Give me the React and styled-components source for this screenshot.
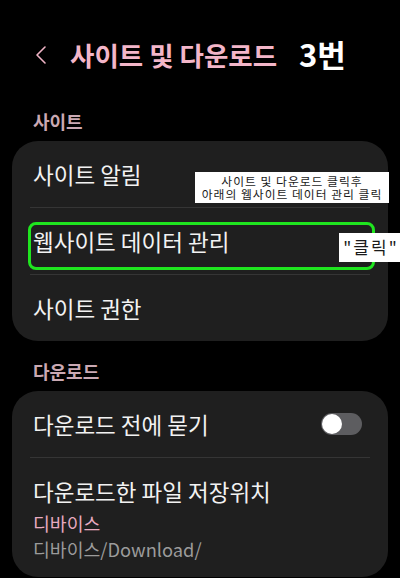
import styled, { createGlobalStyle } from "styled-components";

const GlobalStyle = createGlobalStyle`
  html, body {
    margin: 0;
    padding: 0;
    background: #000;
  }
  body {
    font-family: "Noto Sans CJK KR", "Noto Sans", sans-serif;
    -webkit-font-smoothing: antialiased;
  }
`;

const Page = styled.div`
  position: relative;
  width: 400px;
  height: 578px;
  overflow: hidden;
  background: #000;
`;

const Header = styled.div`
  display: flex;
  align-items: center;
  height: 72px;
  padding: 19px 0 0 34px;
`;

const BackButton = styled.div`
  display: flex;
  align-items: center;
  width: 36px;
  height: 30px;
`;

const Title = styled.h1`
  margin: 0;
  font-size: 26.5px;
  line-height: 30px;
  font-weight: 700;
  color: #f3b6c9;
  white-space: nowrap;
`;

const Step = styled.span`
  margin-left: 22px;
  font-size: 31px;
  line-height: 30px;
  font-weight: 700;
  color: #fff;
  margin-top: -2px;
  white-space: nowrap;
`;

const SectionTitle = styled.div`
  padding: 19px 33px 9px;
  font-size: 18px;
  line-height: 22px;
  font-weight: 700;
  color: #caa9b3;
`;

const Card = styled.div`
  margin: 0 12px;
  background: #1f1f1f;
  border-radius: 26px;
  overflow: hidden;
`;

const Row = styled.div`
  display: flex;
  align-items: center;
  justify-content: space-between;
  height: 66px;
  padding: 0 26px 0 21px;
`;

const Stack = styled.div`
  display: flex;
  flex-direction: column;
  height: 119px;
  box-sizing: border-box;
  padding: 18px 26px 0 21px;
`;

const Label = styled.div`
  font-size: 22.5px;
  line-height: 30px;
  font-weight: 400;
  color: #f2f2f2;
  margin-bottom: ${(p) => p.$mb || 0}px;
  white-space: nowrap;
`;

const Sub = styled.div`
  font-size: 18.3px;
  line-height: 26px;
  color: ${(p) => p.$color};
`;

const Divider = styled.div`
  height: 1px;
  margin: 0 18px;
  background: #353535;
`;

const Toggle = styled.div`
  position: relative;
  width: 41px;
  height: 22px;
  border-radius: 11px;
  background: #5d5d60;
`;

const Knob = styled.div`
  position: absolute;
  left: 1px;
  top: 1px;
  width: 20px;
  height: 20px;
  border-radius: 50%;
  background: #fff;
`;

const Highlight = styled.div`
  position: absolute;
  left: 28px;
  top: 222px;
  width: 341px;
  height: 42px;
  border: 3px solid #1fe51f;
  border-radius: 8px;
`;

const Note = styled.div`
  position: absolute;
  left: ${(p) => p.$left}px;
  top: ${(p) => p.$top}px;
  width: ${(p) => p.$w}px;
  height: ${(p) => p.$h}px;
  box-sizing: border-box;
  background: #fff;
  color: #1a1a1a;
  text-align: center;
  font-family: "Noto Sans CJK KR", sans-serif;
  font-size: ${(p) => p.$size}px;
  line-height: ${(p) => p.$lh}px;
  padding-top: ${(p) => p.$pt}px;
  letter-spacing: ${(p) => p.$ls || 0}px;
  white-space: nowrap;
`;

function Chevron() {
  return (
    <svg width="14" height="20" viewBox="0 0 14 20">
      <polyline
        points="11,2 3,10 11,18"
        fill="none"
        stroke="#f0b4c6"
        strokeWidth="1.6"
        strokeLinecap="round"
        strokeLinejoin="round"
      />
    </svg>
  );
}

export default function App() {
  return (
    <Page>
      <GlobalStyle />
      <Header>
        <BackButton>
          <Chevron />
        </BackButton>
        <Title>사이트 및 다운로드</Title>
        <Step>3번</Step>
      </Header>

      <SectionTitle>사이트</SectionTitle>
      <Card>
        <Row>
          <Label>사이트 알림</Label>
        </Row>
        <Divider />
        <Row>
          <Label>웹사이트 데이터 관리</Label>
        </Row>
        <Divider />
        <Row>
          <Label>사이트 권한</Label>
        </Row>
      </Card>

      <SectionTitle>다운로드</SectionTitle>
      <Card>
        <Row>
          <Label>다운로드 전에 묻기</Label>
          <Toggle>
            <Knob />
          </Toggle>
        </Row>
        <Divider />
        <Stack>
          <Label $mb={4}>다운로드한 파일 저장위치</Label>
          <Sub $color="#e8aac0">디바이스</Sub>
          <Sub $color="#9b9b9b">디바이스/Download/</Sub>
        </Stack>
      </Card>

      <Highlight />
      <Note $left={195} $top={172} $w={194} $h={31} $size={11.8} $lh={13} $pt={2} $ls={1}>
        사이트 및 다운로드 클릭후
        <br />
        아래의 웹사이트 데이터 관리 클릭
      </Note>
      <Note $left={339} $top={233} $w={64} $h={29} $size={17} $lh={26} $pt={1} $ls={2}>
        "클릭"
      </Note>
    </Page>
  );
}
